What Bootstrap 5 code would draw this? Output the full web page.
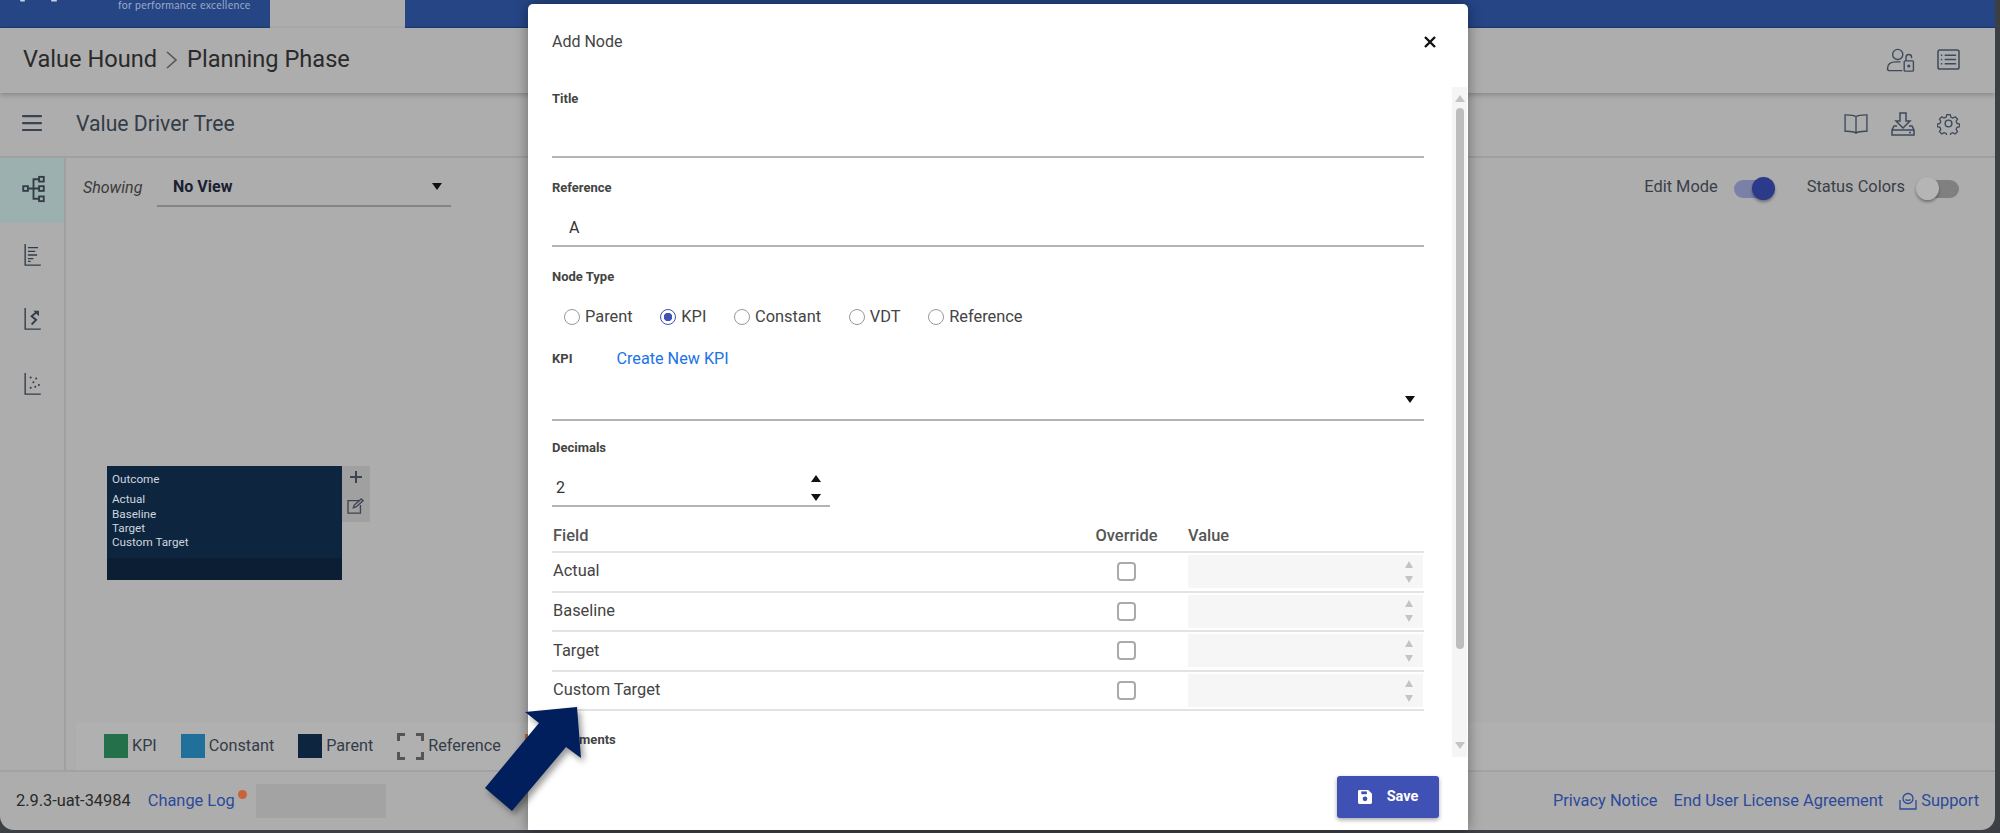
<!DOCTYPE html>
<html lang="en">
<head>
<meta charset="utf-8">
<title>Value Driver Tree</title>
<link rel="stylesheet" href="https://cdn.jsdelivr.net/npm/bootstrap@5.3.0/dist/css/bootstrap.min.css">
<style>
html,body{height:833px;overflow:hidden}
body{background:#3c3f44;font-family:Roboto,"Liberation Sans",sans-serif;color:#222;position:relative}
.app-shell{height:830px;width:1995px;background:#adadad;border-radius:0 0 14px 14px;overflow:hidden;display:flex;flex-direction:column;margin-right:5px}
.top-strip{height:28px;background:#254585;display:flex;flex:none;border-bottom:1px solid #1e3a72}
.logo-area{width:270px;color:#9aa8c4;font-size:10.5px;line-height:11px;overflow:hidden;font-family:Lato,sans-serif;display:flex;letter-spacing:.3px;white-space:nowrap}
.logo-area svg{flex:none}
.tab-gap{width:135px;background:#adadad;margin-bottom:-1px}
.head-row{height:65px;flex:none;display:flex;align-items:center;justify-content:space-between;padding:0 35px 2px 23px;box-shadow:0 2px 5px rgba(0,0,0,.22);position:relative}
.crumb{font-size:23.6px;color:#2a2a2a;display:flex;align-items:center;gap:9px}
.crumb svg{margin-top:2px}
.sub-row{height:65px;flex:none;display:flex;align-items:center;justify-content:space-between;padding:0 35px 2px 22px;border-bottom:2px solid #a0a0a0}
.sub-title{font-size:21.2px;color:#333c47;margin-left:34px}
.icons-gap{display:flex;gap:22px;align-items:center}
.work-area{flex:1;display:flex;min-height:0}
.side-rail{width:66px;flex:none;border-right:2px solid #a0a0a0;display:flex;flex-direction:column}
.rail-item{height:64.5px;display:flex;align-items:center;justify-content:center;flex:none}
.rail-item.is-on{background:#9db0b0;padding-left:3px;padding-bottom:2px}
.canvas-pane{flex:1;position:relative;padding:12px 36px 0 17px;display:flex;justify-content:space-between;align-items:flex-start}
.view-picker{display:flex;align-items:center}
.view-label{font-style:italic;font-size:16px;color:#3b3b3b;width:74px;padding-bottom:2px}
.view-select{width:294px;height:37px;border-bottom:2px solid #858585;display:flex;align-items:center;justify-content:space-between;padding:0 9px 2px 16px;font-weight:700;font-size:16px;color:#1a2030}
.caret-down{width:0;height:0;border-left:5px solid transparent;border-right:5px solid transparent;border-top:7px solid #111;display:block}
.caret-up{width:0;height:0;border-left:5px solid transparent;border-right:5px solid transparent;border-bottom:7px solid #111;display:block}
.toggles{display:flex;align-items:center;font-size:16.4px;color:#3a3f48;height:37px}
.sw-label{padding-bottom:2px}
.sw-track{width:38px;height:18px;border-radius:9px;position:relative;display:block}
.sw-track.on{background:#7a80a8;margin:0 35px 0 16px}
.sw-track.off{background:#808080;margin-left:16px}
.sw-knob{position:absolute;width:23px;height:23px;border-radius:50%;top:-3px;box-shadow:0 2px 3px rgba(0,0,0,.35)}
.on .sw-knob{background:#2b3a8a;right:-3px}
.off .sw-knob{background:#b5b5b5;left:-5px}
.tree-node{position:absolute;left:41px;top:308px;width:235px;height:114px;background:#0e253f;color:#cfd6de;font-size:11.7px;line-height:14.3px;padding:6px 5px}
.tree-node p{margin:0 0 6px}
.tree-foot{position:absolute;left:0;right:0;bottom:0;height:22px;background:#0b1e33}
.node-tools{position:absolute;left:276px;top:308px;width:28px;height:56px;background:#a0a0a0;display:flex;flex-direction:column;align-items:center;padding-top:3px;gap:13px}
.legend-bar{position:absolute;left:10px;bottom:0;right:0;height:48px;background:#b0b0b0;display:flex;align-items:center;font-size:16.2px;color:#333c47;padding-left:28px;overflow:hidden}
.swatch{width:24px;height:24px;display:block;margin-right:4px}
.swatch-kpi{background:#24704a}
.swatch-con{background:#216f9b}
.swatch-par{background:#0e253f}
.swatch-oth{background:#c8623a}
.legend-item{display:flex;align-items:center;flex:none}
.foot-row{height:60px;flex:none;border-top:2px solid #a2a2a2;display:flex;align-items:center;justify-content:space-between;padding:0 16px;font-size:16.4px}
.foot-row a{color:#2b4a9b;text-decoration:none}
.foot-left{display:flex;align-items:center}
.foot-ver{color:#2a2a2a;margin-right:17px}
.log-dot{width:9px;height:9px;border-radius:50%;background:#c8623a;display:block;margin:-13px 0 0 3px}
.blank-chip{width:130px;height:34px;background:#a3a3a3;display:block;margin-left:9px}
.foot-right{display:flex;align-items:center;gap:16px}
.modal-sheet.modal-content{position:absolute;left:528px;top:4px;width:940px;height:826px;border:0;border-radius:5px 5px 0 0;background:#fff;display:block;box-shadow:0 0 14px rgba(0,0,0,.4);color:#444}
.sheet-head{height:83px;padding:0 24px;display:flex;justify-content:space-between;align-items:flex-start}
.sheet-title{font-size:16px;margin-top:26px;color:#444}
.sheet-close{margin:32px 8px 0 0;display:block}
.sheet-body{position:relative;height:670px;overflow:hidden;padding:2px 44px 0 24px}
.f-label{font-size:13px;font-weight:700;color:#444;line-height:20px;display:block}
.line-field{height:49px;border-bottom:2px solid #b4b4b4;margin-bottom:20px;font-size:16px;color:#333;padding-left:17px;padding-top:20px;line-height:20px}
.type-row{display:flex;height:38px;align-items:center;margin-top:11px;padding-left:12px;font-size:16.4px;color:#444}
.type-row .form-check{margin:0 27.6px 0 0;padding:0;display:flex;align-items:center;min-height:0}
.type-row .form-check-input{float:none;margin:0 5px 0 0;width:16px;height:16px;border-color:#999}
.type-row .form-check-input:checked{background-color:#fff;border-color:#3f51b5;background-image:radial-gradient(circle,#3f51b5 0 4px,transparent 4.5px)}
.type-row .form-check-label{color:#444}
.kpi-head{display:flex;align-items:center;gap:44px;margin-top:13px}
.kpi-head a{color:#1a73e8;text-decoration:none;font-size:16.2px;line-height:20px}
.pick-field{height:52px;border-bottom:2px solid #b4b4b4;display:flex;justify-content:flex-end;align-items:center;padding:10px 9px 0 0;margin-bottom:17px}
.num-field{width:278px;height:49px;border-bottom:2px solid #b4b4b4;display:flex;justify-content:space-between;align-items:center;padding:13px 9px 0 4px;font-size:16px;color:#333}
.spin-pair{display:flex;flex-direction:column;gap:12px}
.table.kpi-table{margin:14px 0 19px;font-size:16.4px;color:#444;--bs-table-bg:transparent;table-layout:fixed;width:872px}
.kpi-table th{font-weight:500;color:#555;height:31px;padding:0 0 0 1px;border-bottom:2px solid #e3e3e3;vertical-align:middle}
.kpi-table td{height:39.6px;padding:0 0 0 1px;border-bottom:2px solid #e3e3e3;vertical-align:middle}
.kpi-table .form-check-input{width:19px;height:19px;border:2px solid #aaa;border-radius:4px;margin:0;display:block}
.col-a{width:513px}
.col-b{width:122px}
.col-c{width:237px}
.cell-mid{text-align:center}
.cell-mid .form-check-input{margin:0 auto!important}
.off-input{height:33px;width:235px;background:#f6f6f6;display:flex;flex-direction:column;justify-content:center;align-items:flex-end;gap:8px;padding-right:10px}
.off-input .caret-up{border-bottom-color:#c4c4c4;border-left-width:4px;border-right-width:4px}
.off-input .caret-down{border-top-color:#c4c4c4;border-left-width:4px;border-right-width:4px}
.scroll-rail{position:absolute;top:0;right:1px;width:15px;height:670px;background:#f5f5f5;display:flex;flex-direction:column;align-items:center;justify-content:space-between;padding:8px 0}
.scroll-rail .caret-up{border-bottom-color:#c4c4c4}
.scroll-rail .caret-down{border-top-color:#c4c4c4}
.scroll-thumb{position:absolute;top:21px;left:4px;width:8px;height:541px;background:#bdbdbd;border-radius:4px}
.sheet-foot{display:flex;justify-content:flex-end;padding:19px 29px 0 0}
.btn.save-btn{width:102px;height:42px;background:#3f51b5;border:0;border-radius:3px;color:#fff;font-weight:700;font-size:14.5px;display:flex;align-items:center;justify-content:center;gap:15px;box-shadow:0 2px 4px rgba(0,0,0,.35);padding:0}
.pointer-arrow{position:absolute;left:470px;top:695px;filter:drop-shadow(3px 4px 3px rgba(0,0,0,.4))}
</style>
</head>
<body>
<div class="app-shell">
  <div class="top-strip">
    <div class="logo-area">
      <svg width="118" height="3" viewBox="0 0 118 3" fill="#c9d0de"><rect x="20" width="5" height="1.500" rx=".7"/><rect x="51" width="6" height="1.500" rx=".7"/></svg>
      <span>for performance excellence</span>
    </div>
    <div class="tab-gap"></div>
  </div>
  <div class="head-row">
    <div class="crumb"><span>Value Hound</span>
      <svg width="12" height="20" viewBox="0 0 12 20" fill="none" stroke="#555" stroke-width="1.600"><path d="M1 2l9 8-9 8"/></svg>
      <span>Planning Phase</span></div>
    <div class="icons-gap">
      <svg width="29" height="24" viewBox="0 0 30 26" fill="none" stroke="#3d4a5c" stroke-width="1.500"><circle cx="12" cy="7" r="5.500"/><path d="M1 24v-2c0-5 4-7 9-7h5M17 24.500H3a2 2 0 0 1-2-2"/><rect x="19" y="14" width="10" height="11" rx="1"/><path d="M21 14v-4a3 3 0 0 1 6 0v1"/><circle cx="24" cy="19.500" r="1" fill="#3d4a5c"/></svg>
      <svg width="23" height="21" viewBox="0 0 24 22" fill="none" stroke="#3d4a5c" stroke-width="1.600"><rect x="1" y="1" width="22" height="20" rx="2"/><path d="M8 6.500h12M8 11h12M8 15.500h12M4 6.500h1.500M4 11h1.500M4 15.500h1.500"/></svg>
    </div>
  </div>
  <div class="sub-row">
    <div class="d-flex align-items-center">
      <svg width="20" height="16" viewBox="0 0 20 16" fill="#3b4350"><rect width="20" height="2.200" rx="1"/><rect y="7" width="20" height="2.200" rx="1"/><rect y="14" width="20" height="2.200" rx="1"/></svg>
      <span class="sub-title">Value Driver Tree</span>
    </div>
    <div class="icons-gap">
      <svg width="26" height="20" viewBox="0 0 26 22" fill="none" stroke="#3d4a5c" stroke-width="1.500"><path d="M13 3c-2-1.500-5-2-11-2H1v18h2c5 0 8 .5 10 2 2-1.500 5-2 10-2h2V1h-1c-6 0-9 .5-11 2zM13 3v18"/></svg>
      <svg width="24" height="24" viewBox="0 0 24 24" fill="none" stroke="#3d4a5c" stroke-width="1.500"><path d="M9 1h6v8h4l-7 7-7-7h4zM6 14H3l-2 4v5h22v-5l-2-4h-3M1 18h22M18 20.500h2"/></svg>
      <svg width="23" height="23" viewBox="0 0 24 24" fill="none" stroke="#3d4a5c" stroke-width="1.500"><circle cx="12" cy="12" r="3.500"/><path d="M10 1.500h4l.7 3 2.500 1.100 2.700-1.500 2.700 2.800-1.600 2.600 1 2.500 3 .7v3l-3 .8-1 2.500 1.600 2.600-2.800 2.700-2.600-1.600-2.500 1-.7 3h-4l-.7-3-2.500-1-2.600 1.600-2.800-2.700 1.600-2.600-1-2.500-3-.8v-3l3-.7 1-2.500-1.600-2.600 2.800-2.800 2.600 1.500 2.500-1.100z" transform="translate(1.300 1.300) scale(.89)"/></svg>
    </div>
  </div>
  <div class="work-area">
    <div class="side-rail">
      <div class="rail-item is-on"><svg width="23" height="28" viewBox="0 0 24 30" fill="none" stroke="#333c47" stroke-width="2"><rect x="1" y="12" width="5" height="5"/><rect x="18" y="2" width="5" height="5"/><rect x="18" y="12" width="5" height="5"/><rect x="18" y="23" width="5" height="5"/><path d="M6 14.500h6M18 4.500h-6v21h6M12 14.500h6"/></svg></div>
      <div class="rail-item"><svg width="17" height="22" viewBox="0 0 18 24" fill="none" stroke="#333c47" stroke-width="1.500"><path d="M1 0v23h17M4 4h11M4 8h8M4 12h10M4 16h6M4 19h3"/></svg></div>
      <div class="rail-item"><svg width="17" height="22" viewBox="0 0 18 24" fill="none" stroke="#333c47" stroke-width="1.500"><path d="M1 0v23h17"/><path d="M13 5l-5 4 5 4-5 5" stroke-width="2"/><path d="M10 3h6v6z" fill="#333c47" stroke="none"/></svg></div>
      <div class="rail-item"><svg width="17" height="22" viewBox="0 0 18 24" fill="#333c47"><path d="M1 0v23h17" fill="none" stroke="#333c47" stroke-width="1.500"/><circle cx="7" cy="5" r="1.100"/><circle cx="13" cy="6" r="1.100"/><circle cx="10" cy="10" r="1.100"/><circle cx="16" cy="13" r="1.100"/><circle cx="7" cy="16" r="1.100"/><circle cx="12" cy="15" r="1.100"/></svg></div>
    </div>
    <div class="canvas-pane">
      <div class="view-picker">
        <span class="view-label">Showing</span>
        <div class="view-select"><span>No View</span><i class="caret-down"></i></div>
      </div>
      <div class="toggles">
        <span class="sw-label">Edit Mode</span><span class="sw-track on"><i class="sw-knob"></i></span>
        <span class="sw-label">Status Colors</span><span class="sw-track off"><i class="sw-knob"></i></span>
      </div>
      <div class="tree-node">
        <p>Outcome</p>
        <div>Actual</div><div>Baseline</div><div>Target</div><div>Custom Target</div>
        <div class="tree-foot"></div>
      </div>
      <div class="node-tools">
        <svg width="16" height="16" viewBox="0 0 16 16" stroke="#3d4450" stroke-width="2"><path d="M8 2v12M2 8h12"/></svg>
        <svg width="20" height="16" viewBox="0 0 20 18" fill="none" stroke="#3d4450" stroke-width="1.500"><path d="M14 3H1v14h14V8"/><path d="M7 11l1-3 8-7 2 2-8 7z"/></svg>
      </div>
      <div class="legend-bar">
        <div class="legend-item"><i class="swatch swatch-kpi"></i>KPI</div>
        <div class="legend-item ms-4"><i class="swatch swatch-con"></i>Constant</div>
        <div class="legend-item ms-4"><i class="swatch swatch-par"></i>Parent</div>
        <div class="legend-item ms-4">
          <svg class="me-1" width="27" height="27" viewBox="0 0 27 27" fill="none" stroke="#555" stroke-width="3"><path d="M1.500 8V1.500H8M19 1.500h6.500V8M1.500 19v6.500H8M19 25.500h6.500V19"/></svg>Reference</div>
        <div class="legend-item ms-4"><i class="swatch swatch-oth"></i></div>
      </div>
    </div>
  </div>
  <div class="foot-row">
    <div class="foot-left">
      <span class="foot-ver">2.9.3-uat-34984</span><a href="#">Change Log</a><i class="log-dot"></i><i class="blank-chip"></i>
    </div>
    <div class="foot-right">
      <a href="#">Privacy Notice</a><a href="#">End User License Agreement</a>
      <a href="#" class="d-flex align-items-center gap-1"><svg width="18" height="18" viewBox="0 0 18 18" fill="none" stroke="#2b4a9b" stroke-width="1.300"><circle cx="9" cy="6.500" r="5"/><path d="M6.500 7.500c1 1.200 4 1.200 5 0M1 8v9h16V8" /></svg>Support</a>
    </div>
  </div>
</div>

<div class="modal-sheet modal-content">
  <div class="sheet-head">
    <div class="sheet-title">Add Node</div>
    <svg class="sheet-close" width="12" height="12" viewBox="0 0 12 12" stroke="#111" stroke-width="2.400"><path d="M1 1l10 10M11 1L1 11"/></svg>
  </div>
  <div class="sheet-body">
    <label class="f-label">Title</label>
    <div class="line-field"></div>
    <label class="f-label">Reference</label>
    <div class="line-field">A</div>
    <label class="f-label">Node Type</label>
    <div class="type-row">
      <div class="form-check"><input class="form-check-input" type="radio" name="nt" id="r1"><label class="form-check-label" for="r1">Parent</label></div>
      <div class="form-check"><input class="form-check-input" type="radio" name="nt" id="r2" checked><label class="form-check-label" for="r2">KPI</label></div>
      <div class="form-check"><input class="form-check-input" type="radio" name="nt" id="r3"><label class="form-check-label" for="r3">Constant</label></div>
      <div class="form-check"><input class="form-check-input" type="radio" name="nt" id="r4"><label class="form-check-label" for="r4">VDT</label></div>
      <div class="form-check"><input class="form-check-input" type="radio" name="nt" id="r5"><label class="form-check-label" for="r5">Reference</label></div>
    </div>
    <div class="kpi-head"><span class="f-label">KPI</span><a href="#">Create New KPI</a></div>
    <div class="pick-field"><i class="caret-down"></i></div>
    <label class="f-label">Decimals</label>
    <div class="num-field"><span>2</span><span class="spin-pair"><i class="caret-up"></i><i class="caret-down"></i></span></div>
    <table class="table kpi-table">
      <colgroup><col class="col-a"><col class="col-b"><col class="col-c"></colgroup>
      <thead><tr><th>Field</th><th class="text-center">Override</th><th>Value</th></tr></thead>
      <tbody>
        <tr><td>Actual</td><td class="cell-mid"><input class="form-check-input" type="checkbox"></td><td><div class="off-input"><i class="caret-up"></i><i class="caret-down"></i></div></td></tr>
        <tr><td>Baseline</td><td class="cell-mid"><input class="form-check-input" type="checkbox"></td><td><div class="off-input"><i class="caret-up"></i><i class="caret-down"></i></div></td></tr>
        <tr><td>Target</td><td class="cell-mid"><input class="form-check-input" type="checkbox"></td><td><div class="off-input"><i class="caret-up"></i><i class="caret-down"></i></div></td></tr>
        <tr><td>Custom Target</td><td class="cell-mid"><input class="form-check-input" type="checkbox"></td><td><div class="off-input"><i class="caret-up"></i><i class="caret-down"></i></div></td></tr>
      </tbody>
    </table>
    <label class="f-label">Comments</label>
    <div class="scroll-rail"><i class="caret-up"></i><div class="scroll-thumb"></div><i class="caret-down"></i></div>
  </div>
  <div class="sheet-foot">
    <button class="btn save-btn" type="button">
      <svg width="14" height="14" viewBox="0 0 15 15" fill="#fff"><path d="M0 1.500A1.500 1.500 0 0 1 1.500 0H11l4 4v9.500a1.500 1.500 0 0 1-1.500 1.500h-12A1.500 1.500 0 0 1 0 13.500z"/><rect x="3.500" y="1.500" width="6" height="3" fill="#3f51b5"/><circle cx="7.500" cy="9.500" r="2.500" fill="#3f51b5"/></svg>
      <span>Save</span></button>
  </div>
</div>

<svg class="pointer-arrow" width="125" height="130" viewBox="470 695 125 130"><polygon points="577,707 525,712 539,723 485,788 512,811 566,747 581,758" fill="#001f5c"/></svg>

<script src="https://cdn.jsdelivr.net/npm/bootstrap@5.3.0/dist/js/bootstrap.bundle.min.js"></script>
</body>
</html>
